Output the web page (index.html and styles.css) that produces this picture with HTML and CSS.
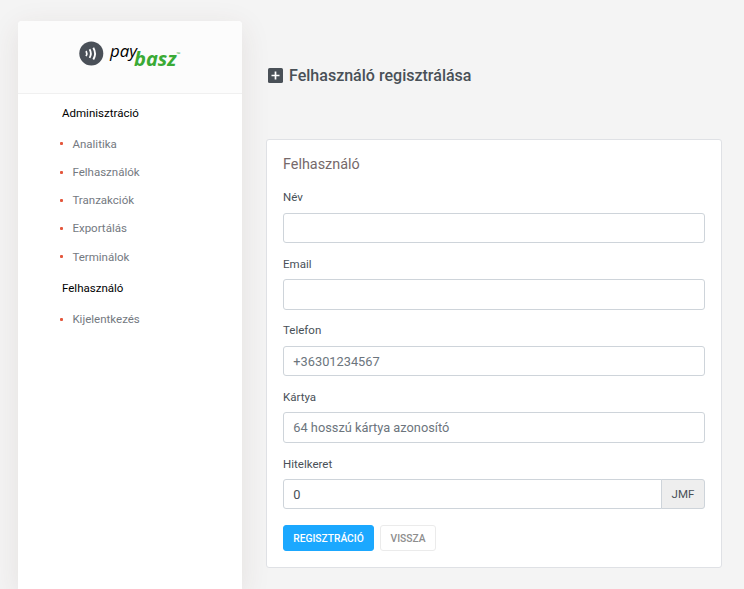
FILE: index.html
```html
<!DOCTYPE html>
<html lang="hu">
<head>
<meta charset="utf-8">
<title>Felhasználó regisztrálása</title>
<link rel="stylesheet" href="styles.css">
</head>
<body>
<div class="layout">
  <aside class="sidebar">
    <div class="brand">
      <svg width="104" height="28" viewBox="0 0 104 28" role="img" aria-label="paybasz">
        <circle cx="12.3" cy="13.6" r="12" fill="#4a5058"/>
        <g fill="none" stroke="#fff">
          <path d="M7.1 11q1.4 2.6 0 5.2" stroke-width="1.7"/>
          <path d="M10.6 9.3q2.5 4.3 0 8.6" stroke-width="1.8"/>
          <path d="M14.3 7.7q3.5 5.9 0 11.8" stroke-width="1.9"/>
        </g>
        <text class="logo-pay" x="31" y="16.8" textLength="27" lengthAdjust="spacingAndGlyphs">pay</text>
        <text class="logo-basz" x="55" y="25.5" textLength="42.5" lengthAdjust="spacingAndGlyphs">basz</text>
        <text class="logo-tm" x="97.5" y="15.5">™</text>
      </svg>
    </div>
    <nav class="menu">
      <h2>Adminisztráció</h2>
      <ul>
        <li>Analitika</li>
        <li>Felhasználók</li>
        <li>Tranzakciók</li>
        <li>Exportálás</li>
        <li>Terminálok</li>
      </ul>
      <h2>Felhasználó</h2>
      <ul>
        <li>Kijelentkezés</li>
      </ul>
    </nav>
  </aside>
  <main class="content">
    <h1>
      <svg width="15" height="15" viewBox="0 0 15 15" aria-hidden="true">
        <rect width="15" height="15" rx="1.6" fill="#495057"/>
        <path d="M7.5 3.5v8M3.5 7.5h8" stroke="#fff" stroke-width="1.7"/>
      </svg>
      <span>Felhasználó regisztrálása</span>
    </h1>
    <form class="card">
      <h3>Felhasználó</h3>
      <div class="group"><label for="name">Név</label><input id="name" type="text"></div>
      <div class="group"><label for="email">Email</label><input id="email" type="text"></div>
      <div class="group"><label for="phone">Telefon</label><input id="phone" type="text" placeholder="+36301234567"></div>
      <div class="group"><label for="card">Kártya</label><input id="card" type="text" placeholder="64 hosszú kártya azonosító"></div>
      <div class="group">
        <label for="credit">Hitelkeret</label>
        <div class="input-row"><input id="credit" type="text" value="0"><span class="unit">JMF</span></div>
      </div>
      <div class="actions">
        <button class="primary" type="button">Regisztráció</button>
        <button class="secondary" type="button">Vissza</button>
      </div>
    </form>
  </main>
</div>
</body>
</html>
```
FILE: styles.css
```css
* { box-sizing: border-box; }
body {
  margin: 0;
  background: #f4f4f4;
  color: #495057;
  font-family: Roboto, "Liberation Sans", sans-serif;
  font-size: 11.52px;
}
h1, h2, h3, ul { margin: 0; padding: 0; font-weight: 400; }
.layout { display: flex; height: 589px; padding: 21px 22px 0 18px; gap: 24px; overflow: hidden; }
.sidebar {
  width: 224px;
  height: 568px;
  flex: none;
  background: #fff;
  border-radius: 4px 4px 0 0;
  box-shadow: 0 7px 30px rgba(90, 45, 40, .1);
}
.brand {
  height: 73px;
  padding: 19px 0 0 61px;
  background: #fcfcfc;
  border-bottom: 1px solid #f0f0f0;
  border-radius: 4px 4px 0 0;
}
.brand svg { display: block; overflow: visible; }
.logo-pay { font: italic 17px "Open Sans", sans-serif; fill: #000; }
.logo-basz { font: italic 700 19.5px "Open Sans", sans-serif; fill: #3aaa35; }
.logo-tm { font: 5px "Open Sans", sans-serif; fill: #3aaa35; }
.menu { padding-left: 44px; }
.menu h2 { height: 35.8px; padding-top: 9px; font-size: 11.52px; line-height: 20px; color: #000; }
.menu ul { list-style: none; }
.menu li {
  display: flex;
  align-items: center;
  height: 28.2px;
  margin-left: -2px;
  color: #74797f;
}
.menu li::before {
  content: "";
  width: 3px;
  height: 3px;
  margin-right: 9.4px;
  border-radius: 1px;
  background: #e4573d;
}
.menu ul + h2 { height: 34.5px; padding-top: 7px; }
.content { flex: 1; }
h1 {
  display: flex;
  align-items: center;
  height: 28px;
  margin: 40px 0 50px;
  padding-left: 2px;
  gap: 6px;
  font-size: 16.05px;
  font-weight: 500;
}
.card {
  height: 429px;
  padding: 15px 16px 0;
  background: #fff;
  border: 1px solid #dfe1e5;
  border-radius: 3px;
}
.card h3 { height: 33.4px; font-size: 14.4px; line-height: 20px; color: #76696a; }
.group { height: 66.55px; }
.group label { display: block; height: 24.4px; line-height: 18px; }
input {
  display: block;
  width: 100%;
  height: 30.4px;
  padding: 0 9.3px;
  border: 1px solid #ced4da;
  border-radius: 3px;
  background: #fff;
  color: #495057;
  font: 12.8px Roboto, "Liberation Sans", sans-serif;
}
input::placeholder { color: #6c757d; opacity: 1; }
.input-row { display: flex; }
.input-row input { flex: 1; min-width: 0; border-radius: 3px 0 0 3px; }
.unit {
  display: flex;
  align-items: center;
  justify-content: center;
  width: 44px;
  margin-left: -1px;
  border: 1px solid #ced4da;
  border-radius: 0 3px 3px 0;
  background: #eee;
}
.actions { display: flex; gap: 6px; padding-top: 4px; }
button {
  height: 26px;
  padding: 0;
  border: 1px solid #1ba8ff;
  border-radius: 3px;
  font: 500 10.24px Roboto, "Liberation Sans", sans-serif;
  text-transform: uppercase;
}
.primary { width: 91px; background: #1ba8ff; color: #fff; }
.secondary { width: 56px; background: #fff; border-color: #ebebeb; color: #8d8d8d; }
```
